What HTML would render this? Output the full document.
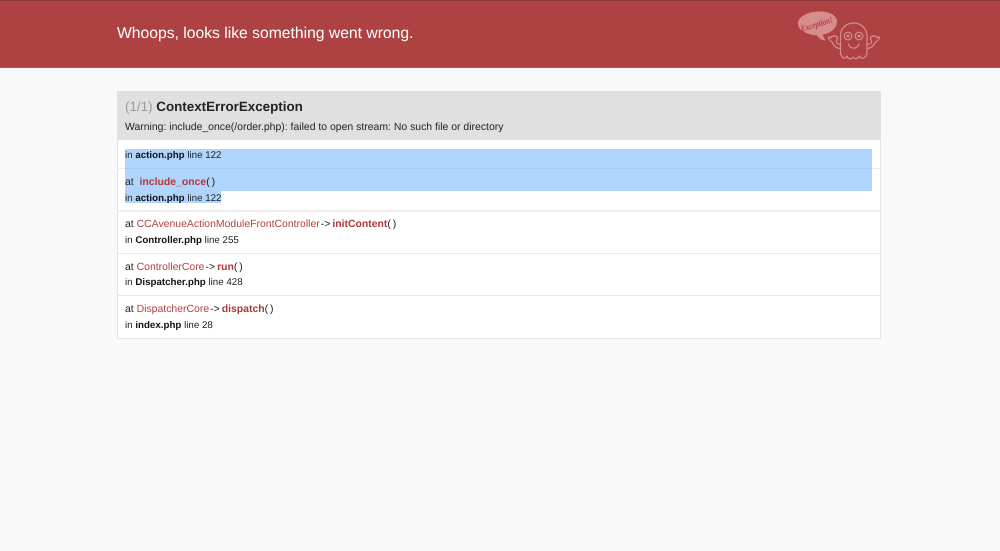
<!DOCTYPE html>
<html><head><meta charset="utf-8"><style>
html,body{margin:0;padding:0;width:1000px;height:551px;overflow:hidden;background:#f9f9f9;font-family:"Liberation Sans",sans-serif;text-rendering:geometricPrecision}
.a{position:absolute;white-space:nowrap}
.t{font-size:10.45px;line-height:14px;color:#222}
.t b{color:#111}
.s{font-size:9.75px}
.r{color:#b5403f}
.r2{color:#b0393a;font-weight:bold}
.w{margin:0 2px 0 1px}
.p{margin-left:0;word-spacing:-1px}
</style></head><body>
<div class="a" style="left:0;top:0;width:1000px;height:68px;background:#ae4242;border-top:1px solid #8e3a3a;box-sizing:border-box;border-bottom:1px solid #b85a5a"></div>
<div class="a" style="left:117px;top:24px;font-size:15.7px;line-height:20px;color:#fff">Whoops, looks like something went wrong.</div>
<svg class="a" style="left:795px;top:5px" width="90" height="58" viewBox="795 5 90 58">
<path d="M820 11.500c10 0 17 4 17 10 0 7-7 12-14 13 0 2 1 4 3 6-4 0-7-2-9-5-10-1-19-5-19-12 0-7 10-12 22-12z" fill="#d88d8d"/>
<text x="817.500" y="27" transform="rotate(-17 817.500 27)" text-anchor="middle" font-family="Liberation Serif" font-style="italic" font-weight="bold" font-size="9" textLength="33" lengthAdjust="spacingAndGlyphs" fill="#ae4242">Exception!</text>
<g fill="none" stroke="#d88d8d" stroke-width="1.2" stroke-linecap="round" stroke-linejoin="round">
<path d="M840.500 53V36c0-7.500 5.500-13 13-13s13.500 5.500 13.500 13v17c0 1.500 0 2-1 3-2 3-5 3-7 0-1.500 3.500-4.500 3.500-6 1-1.500 2.500-4.500 2.500-6-1-1.500 3-4.500 3-6-1.500-.4-.5-.5-1-.5-1.500z"/>
<circle cx="848" cy="36" r="3.800"/><circle cx="859" cy="36" r="3.800"/>
<path d="M848.500 44c1.500 5.500 8.500 5.500 10.500 0"/>
<path d="M840.500 48.500c-4 0-7.500-3.500-8.500-6.500-1.500-1-4-3-3.500-4.500.5-1 1.500-.5 2.500.5 0-1.500 1-2 2-1.500 0-1 2-1 2.500 0 1-.5 2.500.5 2 2-.5 1.500-1.500 2.500-1 4 .5 1 1.500 1.500 4 2"/>
<path d="M867 48.500c4 0 7.500-3.500 8.500-6.500 1.500-1 4.500-3 4-4.500-.5-1-1.500-.5-2.500.5 0-1.500-1-2-2-1.500 0-1-2-1-2.500 0-1-.5-2.500.5-2 2 .5 1.500 1.500 2.500 1 4-.5 1-1.500 1.500-4 2"/>
</g>
<circle cx="848" cy="36" r="1.500" fill="#d88d8d"/><circle cx="859" cy="36" r="1.500" fill="#d88d8d"/>
</svg>
<div class="a" style="left:117px;top:91px;width:764px;height:248px;box-sizing:border-box;background:#fff;border:1px solid #e4e4e4;border-top:0"></div>
<div class="a" style="left:117px;top:91px;width:764px;height:49px;background:#e0e0e0"></div>
<div class="a" style="left:125px;top:98px;font-size:13.4px;line-height:17px;font-weight:bold;color:#222"><span style="color:#999;font-weight:normal">(1/1)</span> ContextErrorException</div>
<div class="a t" style="left:125px;top:121px">Warning: include_once(/order.php): failed to open stream: No such file or directory</div>
<div class="a" style="left:117px;top:168px;width:764px;height:1px;background:#ececec"></div>
<div class="a" style="left:125px;top:149px;width:747px;height:42px;background:#afd5fd"></div>
<div class="a" style="left:125px;top:191px;width:96px;height:12px;background:#afd5fd"></div>
<div class="a" style="left:125px;top:168px;width:747px;height:1px;background:#a6cbf1"></div>
<div class="a" style="left:117px;top:210px;width:764px;height:2px;background:#efefef"></div>
<div class="a" style="left:117px;top:253px;width:764px;height:1px;background:#e8e8e8"></div>
<div class="a" style="left:117px;top:295px;width:764px;height:1px;background:#e8e8e8"></div>
<div class="a t s" style="left:125px;top:149px">in <b>action.php</b> line 122</div>
<div class="a t" style="left:125px;top:176px">at&nbsp; <span class="r2">include_once</span><span class="p">( )</span></div>
<div class="a t s" style="left:125px;top:192px">in <b>action.php</b> line 122</div>
<div class="a t" style="left:125px;top:218px">at <span class="r">CCAvenueActionModuleFrontController</span><span class="w">-&gt;</span><span class="r2">initContent</span><span class="p">( )</span></div>
<div class="a t s" style="left:125px;top:234px">in <b>Controller.php</b> line 255</div>
<div class="a t" style="left:125px;top:261px">at <span class="r">ControllerCore</span><span class="w">-&gt;</span><span class="r2">run</span><span class="p">( )</span></div>
<div class="a t s" style="left:125px;top:276px">in <b>Dispatcher.php</b> line 428</div>
<div class="a t" style="left:125px;top:303px">at <span class="r">DispatcherCore</span><span class="w">-&gt;</span><span class="r2">dispatch</span><span class="p">( )</span></div>
<div class="a t s" style="left:125px;top:319px">in <b>index.php</b> line 28</div>
</body></html>
